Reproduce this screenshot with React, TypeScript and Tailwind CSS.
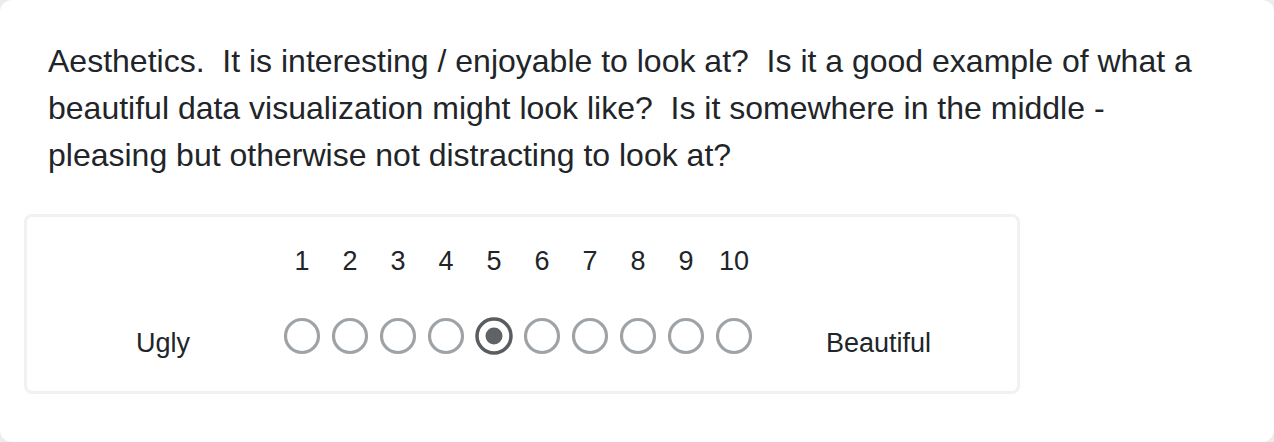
import { useState } from 'react';

const scale = [1, 2, 3, 4, 5, 6, 7, 8, 9, 10];

const Radio = ({ checked, onClick }: { checked: boolean; onClick: () => void }) => (
  <button onClick={onClick} className="w-12 h-[42px] flex items-center justify-center">
    <svg width="38" height="38" viewBox="0 0 38 38">
      {checked ? (
        <>
          <circle cx="19" cy="19" r="17" fill="white" stroke="#595d61" strokeWidth="3.5" />
          <circle cx="19" cy="19" r="8.5" fill="#5f6266" />
        </>
      ) : (
        <circle cx="19" cy="19" r="16.5" fill="white" stroke="#9ea3a7" strokeWidth="3.2" />
      )}
    </svg>
  </button>
);

export default function App() {
  const [value, setValue] = useState(5);

  return (
    <div className="bg-[#ececec] h-[442px] w-full">
      <div className="h-full bg-white rounded-[12px] text-[#212529] font-['Liberation_Sans',Arial,sans-serif]">
        <p className="w-[1240px] pl-12 pt-[38px] text-[32px] leading-[47px]">
          Aesthetics.{'\u00a0'} It is interesting / enjoyable to look at?{'\u00a0'} Is it a good example of what a<br />
          beautiful data visualization might look like?{'\u00a0'} Is it somewhere in the middle -<br />
          pleasing but otherwise not distracting to look at?
        </p>

        <div className="ml-6 mt-[35px] w-[996px] h-[180px] border-[3.5px] border-[#f1f1f1] rounded-[8px] pt-[23px] text-[27px]">
          {/* number header */}
          <div className="flex h-[42px] items-center">
            <div className="w-[251px]" />
            {scale.map((n) => (
              <div key={n} className="w-12 text-center leading-[42px]">{n}</div>
            ))}
          </div>

          {/* radios */}
          <div className="flex h-[42px] items-center mt-[33px]">
            <div className="w-[251px] pl-[21px] pt-[14px] flex justify-center leading-[42px]">Ugly</div>
            {scale.map((n) => (
              <Radio key={n} checked={value === n} onClick={() => setValue(n)} />
            ))}
            <div className="flex-1 pr-[18px] pt-[14px] flex justify-center leading-[42px]">Beautiful</div>
          </div>
        </div>
      </div>
    </div>
  );
}
